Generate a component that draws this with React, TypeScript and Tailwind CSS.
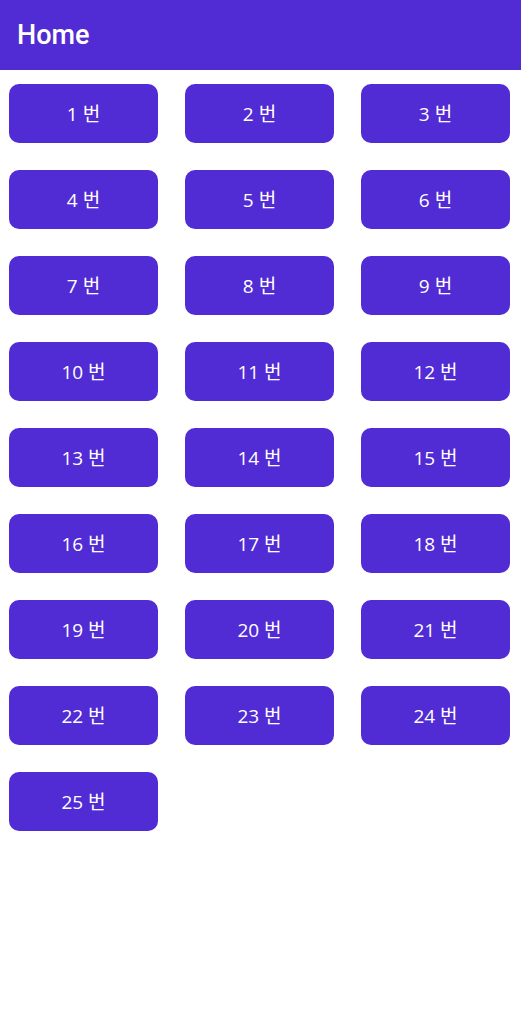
export default function App() {
  const items = Array.from({ length: 25 }, (_, i) => i + 1);
  return (
    <div className="w-[521px] h-[1032px] bg-white" style={{ fontFamily: '"Open Sans", "Noto Sans CJK KR", sans-serif' }}>
      <div className="h-[70px] bg-[#512bd4] flex items-center pl-[17px]">
        <span className="text-white text-[27px] font-medium leading-none" style={{ fontFamily: '"Roboto Medium", Roboto, sans-serif' }}>Home</span>
      </div>
      <div className="grid grid-cols-3 gap-x-[27px] gap-y-[27px] pl-[9px] pr-[11px] pt-[14px]">
        {items.map((n) => (
          <div key={n} className="h-[59px] rounded-[10px] bg-[#512bd4] flex items-center justify-center text-white text-[19px] pt-[2px]">
            {n} 번
          </div>
        ))}
      </div>
    </div>
  );
}
